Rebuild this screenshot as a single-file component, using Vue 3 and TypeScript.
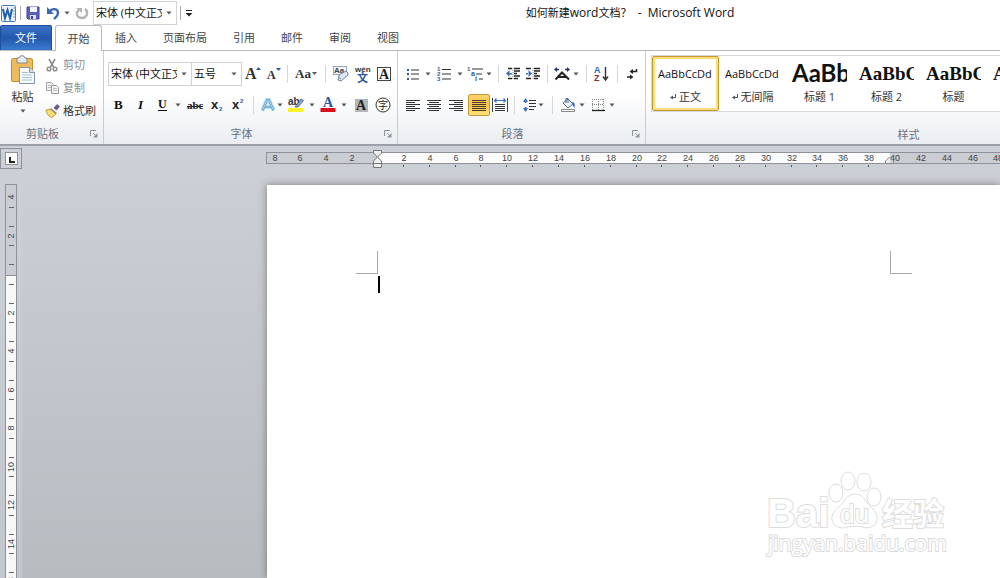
<script setup lang="ts">
interface Glyph { w: number; h: number; body: string }
interface Tool { icon?: string; label: string; kind?: 'sep' | 'caret' | 'on' }
interface StyleItem { sample: string; label: string; mark: boolean; look: string }

const lines = (x: number[], len: number[], color = '#333') =>
  x.map((v, i) => `<path d="M${v} ${i * 2 + 1.5}h${len[i]}" stroke="${color}"/>`).join('')

const serif = 'font-family="Liberation Serif" font-weight="bold"'
const sans = 'font-family="Liberation Sans" font-weight="bold"'
const cjk = 'font-family="Noto Sans CJK SC, sans-serif"'

const glyphs: Record<string, Glyph> = {
  word: { w: 17, h: 17, body: `<rect x="1.5" y=".5" width="14" height="16" rx="1" fill="#e9f2fb" stroke="#4a7fb5"/><path d="M13 3h2M13 6h2M13 9h2M13 12h2" stroke="#7aa7d6"/><path d="M3 4l2 9 2.500-8 2.500 8 2-9" fill="none" stroke="#1d5fa8" stroke-width="2"/>` },
  save: { w: 14, h: 14, body: `<path d="M1 1h12v12H2l-1-1z" fill="#5a5fc0" stroke="#3f4590"/><path d="M4 1h7v5H4z" fill="#f4f6ff"/><path d="M4 9h6v4H4z" fill="#d8dcf4"/><path d="M5 10h2v3H5z" fill="#3f4590"/>` },
  undo: { w: 14, h: 14, body: `<path d="M1 1v7h7z" fill="#3867b5"/><path d="M3 6c3-4 9-4 9 1 0 3-2 4-4 6" fill="none" stroke="#3867b5" stroke-width="2.400"/>` },
  redo: { w: 14, h: 14, body: `<path d="M4 4c-4 3-2 8 3 8 5 0 7-6 3-9" fill="none" stroke="#b4b4b4" stroke-width="2.300"/><path d="M1 2h6v5z" fill="#b4b4b4"/>` },
  caret: { w: 6, h: 4, body: `<path d="M.5 .5h5L3 3.500z" fill="#555"/>` },
  custom: { w: 8, h: 8, body: `<path d="M1 1.500h6" stroke="#222"/><path d="M.5 4h7L4 7.500z" fill="#222"/>` },
  paste: { w: 26, h: 30, body: `<rect x="1.500" y="3.500" width="21" height="23" rx="1.500" fill="#eebb5c" stroke="#c98f2e"/><path d="M7 3h2c0-3 6-3 6 0h2v5H7z" fill="#e6e9ee" stroke="#808792"/><path d="M9.500 12.500h10l5 5v11h-15z" fill="#f8fbff" stroke="#8193ac"/><path d="M19.500 12.500v5h5" fill="#d5e2f4" stroke="#8193ac"/><path d="M12 17.500h6M12 20h10M12 22.500h10M12 25h10" stroke="#a8bcd6"/>` },
  cut: { w: 14, h: 14, body: `<path d="M4 1l4.500 8M10 1L5.500 9" stroke="#8f8f8f" stroke-width="1.700" fill="none"/><circle cx="4" cy="11" r="1.800" fill="none" stroke="#8f8f8f" stroke-width="1.500"/><circle cx="10" cy="11" r="1.800" fill="none" stroke="#8f8f8f" stroke-width="1.500"/>` },
  copy: { w: 15, h: 14, body: `<path d="M1.500 1.500h5l2 2v6h-7z" fill="#eee" stroke="#a8a8a8"/><path d="M6.500 4.500h5l2 2v6h-7z" fill="#f5f5f5" stroke="#999"/><path d="M3 4.500h3M3 6.500h3M8 7.500h4M8 9.500h4" stroke="#bbb"/>` },
  painter: { w: 15, h: 14, body: `<path d="M9 4l3-3.500 2.500 2L11.500 6z" fill="#6a5a9a" stroke="#483c70" stroke-width=".6"/><path d="M6 4l6 5-1.500 1.500L5 6z" fill="#8a8fa0"/><path d="M1 6l4-1 6 5-4 3.500C4 13 1 9 1 6z" fill="#f1d25a" stroke="#b08f24" stroke-width=".7"/><path d="M3 7l4 5M5 6.500l4 4" stroke="#fff2b0"/>` },
  grow: { w: 16, h: 16, body: `<text x="0" y="13" font-size="16" ${serif} fill="#333">A</text><path d="M11 4h5l-2.500-3z" fill="#31579b"/>` },
  shrink: { w: 14, h: 16, body: `<text x="0" y="13" font-size="12" ${serif} fill="#333">A</text><path d="M9 2h5l-2.500 3z" fill="#31579b"/>` },
  letterCase: { w: 22, h: 14, body: `<text x="0" y="11" font-size="13" ${serif} fill="#333">Aa</text><path d="M17 5h5l-2.500 3z" fill="#555"/>` },
  clear: { w: 16, h: 16, body: `<rect x=".5" y=".5" width="13" height="8" fill="#f2f5fa" stroke="#9aa7bb"/><text x="1" y="7" font-size="8" ${sans} fill="#444">Aa</text><path d="M6 9l7-4 2 2v2l-7 6-3-1z" fill="#dfe6f1" stroke="#6f85a8"/><path d="M5 11l3 2" stroke="#6f85a8"/>` },
  phonetic: { w: 18, h: 17, body: `<text x="1" y="6" font-size="8" ${sans} fill="#333">wén</text><text x="3" y="16" font-size="11" font-weight="bold" ${cjk} fill="#31579b">文</text>` },
  border: { w: 16, h: 16, body: `<rect x="1.500" y="1.500" width="13" height="13" fill="#fff" stroke="#444"/><text x="3" y="13" font-size="14" ${serif} fill="#222">A</text>` },
  bold: { w: 12, h: 14, body: `<text x="1" y="11" font-size="13" ${serif} fill="#111">B</text>` },
  italic: { w: 12, h: 14, body: `<text x="3" y="11" font-size="13" font-style="italic" ${serif} fill="#111">I</text>` },
  underline: { w: 12, h: 14, body: `<text x="2" y="10" font-size="12" ${serif} fill="#111">U</text><path d="M2 12.500h9" stroke="#111"/>` },
  strike: { w: 18, h: 14, body: `<text x="1" y="11" font-size="11" ${serif} fill="#222">abc</text><path d="M1 8.500h16" stroke="#222"/>` },
  sub: { w: 14, h: 14, body: `<text x="1" y="11" font-size="13" ${sans} fill="#222">x</text><text x="9" y="13" font-size="6" ${sans} fill="#31579b">2</text>` },
  sup: { w: 14, h: 14, body: `<text x="1" y="11" font-size="13" ${sans} fill="#222">x</text><text x="9" y="5" font-size="6" ${sans} fill="#31579b">2</text>` },
  effect: { w: 16, h: 16, body: `<path d="M2.500 13.500L7 3h2l4.500 10.500M5 10h6" fill="none" stroke="#b5ddf5" stroke-width="4"/><path d="M2.500 13.500L7 3h2l4.500 10.500M5 10h6" fill="none" stroke="#4b92c4" stroke-width="2"/><path d="M2.500 13.500L7 3h2l4.500 10.500M5 10h6" fill="none" stroke="#e8f6ff" stroke-width=".7"/>` },
  highlight: { w: 18, h: 16, body: `<text x="1" y="8" font-size="10" ${sans} fill="#333">ab</text><path d="M8 10l6-8 2.500 1.500L11 10z" fill="#8ba4cc" stroke="#3d5c92" stroke-width=".8"/><path d="M1 11h15v4H1z" fill="#fff12a"/>` },
  color: { w: 16, h: 16, body: `<text x="3" y="10" font-size="14" ${serif} fill="#31579b">A</text><path d="M.5 11h15v4H.5z" fill="#d6111b"/>` },
  shade: { w: 14, h: 14, body: `<path d="M1 1h13v13H1z" fill="#b5b5b5"/><text x="2" y="12" font-size="14" ${serif} fill="#222">A</text>` },
  circled: { w: 16, h: 16, body: `<circle cx="8" cy="8" r="7" fill="#fff" stroke="#333"/><text x="3" y="12" font-size="10" ${cjk} fill="#222">字</text>` },
  bullets: { w: 14, h: 14, body: `<path d="M1 2h2v2H1zM1 6h2v2H1zM1 11h2v2H1z" fill="#31579b"/><path d="M5 3h8M5 7h8M5 12h8" stroke="#333" stroke-width="1.200"/>` },
  numbers: { w: 14, h: 16, body: `<text x="0" y="5" font-size="6" ${sans} fill="#31579b">1</text><text x="0" y="10" font-size="6" ${sans} fill="#31579b">2</text><text x="0" y="15" font-size="6" ${sans} fill="#31579b">3</text><path d="M5 3.500h9M5 8h9M5 13h9" stroke="#333" stroke-width="1.200"/>` },
  levels: { w: 18, h: 16, body: `<text x="1" y="5" font-size="6" ${sans} fill="#31579b">1</text><text x="5" y="10" font-size="7" ${sans} fill="#31579b">a</text><text x="9" y="15" font-size="7" ${sans} fill="#31579b">i</text><path d="M6 3h11M10 8h6M13 13h4" stroke="#333" stroke-width="1.200"/>` },
  outdent: { w: 16, h: 14, body: `<path d="M3 1.500h4M9 1.500h6M9 4h6M9 6.500h3M9 9h6M3 11.500h4M9 11.500h4" stroke="#222" stroke-width="1.600"/><path d="M8 1v12" stroke="#888" stroke-dasharray="1 1"/><path d="M1 6.500L4.500 3v7zM4 6h3v1.500H4z" fill="#3b6fc0"/>` },
  indent: { w: 16, h: 14, body: `<path d="M1 1.500h5M9 1.500h6M9 4h6M9 6.500h3M9 9h6M1 11.500h5M9 11.500h4" stroke="#222" stroke-width="1.600"/><path d="M8 1v12" stroke="#888" stroke-dasharray="1 1"/><path d="M7 6.500L3.500 3v7zM1 6h3v1.500H1z" fill="#3b6fc0"/>` },
  layoutA: { w: 18, h: 14, body: `<path d="M2.500 12.500L9 5.500L16 12.500M5 10h9" fill="none" stroke="#222" stroke-width="2"/><path d="M4 2.500h2M14 2.500h-2" stroke="#26306e" stroke-width="1.500"/><path d="M1 2.500l3-2.500v5zM17 2.500l-3-2.500v5z" fill="#26306e"/>` },
  sort: { w: 16, h: 16, body: `<text x="1" y="7" font-size="9" ${sans} fill="#2f66ad">A</text><text x="1" y="15" font-size="9" ${sans} fill="#8c2f35">Z</text><path d="M12.500 1v12M10 10.500l2.500 3.500 2.500-3.500" fill="none" stroke="#333" stroke-width="1.400"/>` },
  marks: { w: 12, h: 14, body: `<path d="M10.500 2v2.500H5" fill="none" stroke="#222" stroke-width="1.500"/><path d="M3.500 4.500L7 2v5z" fill="#222"/><path d="M1 10h3" stroke="#222" stroke-width="1.500"/><path d="M7.500 10L4 7.500v5z" fill="#222"/>` },
  left: { w: 14, h: 12, body: lines([0, 0, 0, 0, 0], [14, 9, 14, 9, 14]) + '<path d="M0 11.500h9" stroke="#333"/>' },
  center: { w: 14, h: 12, body: lines([0, 2, 0, 2, 0], [14, 10, 14, 10, 14]) + '<path d="M2 11.500h10" stroke="#333"/>' },
  right: { w: 14, h: 12, body: lines([0, 5, 0, 5, 0], [14, 9, 14, 9, 14]) + '<path d="M5 11.500h9" stroke="#333"/>' },
  justify: { w: 14, h: 12, body: lines([0, 0, 0, 0, 0], [14, 14, 14, 14, 14], '#4a3728') + '<path d="M0 11.500h14" stroke="#4a3728"/>' },
  distribute: { w: 16, h: 14, body: `<path d="M.5 0v14M15.500 0v14" stroke="#444"/><path d="M2 2.500h12M4.500 .5l-2 2 2 2M11.500 .5l2 2-2 2" fill="none" stroke="#3b6fc0" stroke-width="1.200"/><path d="M3 6.500h10M3 8.500h10M3 10.500h10M3 12.500h10" stroke="#333"/>` },
  spacing: { w: 16, h: 16, body: `<path d="M5.500 2v4M5.500 10v4" stroke="#3b6fc0" stroke-width="1.500"/><path d="M3 5l2.500-4 2.500 4zM3 11l2.500 4 2.500-4z" fill="#3b6fc0"/><path d="M9 3.500h7M9 6.500h7M9 9.500h7M9 12.500h5" stroke="#333" stroke-width="1.200"/>` },
  fill: { w: 16, h: 16, body: `<path d="M3 6l5-4 5 5-5 4z" fill="#eef3fa" stroke="#4d6b9a"/><path d="M6 6V1.500h2V6" fill="none" stroke="#4d6b9a"/><path d="M12 5c3 0 3 3 2.500 6l-2-3z" fill="#3b6fc0"/><path d="M1.500 12.500h13v2h-13z" fill="#fff" stroke="#8a8a8a"/>` },
  borders: { w: 14, h: 14, body: `<path d="M1 1.500h12M1.500 1v11M7.500 1v11M12.500 1v11M1 6.500h12" stroke="#888" stroke-dasharray="1 1"/><path d="M1 12.500h13" stroke="#222" stroke-width="1.300"/>` },
  launcher: { w: 8, h: 8, body: `<path d="M.5 6V.5H6" fill="none" stroke="#8b93a1"/><path d="M3 3l3 3" stroke="#8b93a1"/><path d="M7.500 3v4.500H3z" fill="#8b93a1"/>` },
  tab: { w: 13, h: 13, body: `<rect x=".5" y=".5" width="12" height="12" fill="#fff" stroke="#8d929a"/><path d="M5 5v5h5" fill="none" stroke="#222" stroke-width="2"/>` },
  returnMark: { w: 6, h: 6, body: `<path d="M5.500 0v3.500H2" fill="none" stroke="#555"/><path d="M0 3.500L3 1.500v4z" fill="#555"/>` },
}

const tabs = ['插入', '页面布局', '引用', '邮件', '审阅', '视图']
const sep: Tool = { label: '', kind: 'sep' }
const more = (label: string): Tool => ({ icon: 'caret', label, kind: 'caret' })
const tool = (icon: string, label: string): Tool => ({ icon, label })

const fontTop: Tool[] = [
  tool('grow', '增大字体'), tool('shrink', '缩小字体'), sep, tool('letterCase', '更改大小写'), sep,
  tool('clear', '清除格式'), tool('phonetic', '拼音指南'), tool('border', '字符边框'),
]
const fontBottom: Tool[] = [
  tool('bold', '加粗'), tool('italic', '倾斜'), tool('underline', '下划线'), more('下划线选项'),
  tool('strike', '删除线'), tool('sub', '下标'), tool('sup', '上标'), sep,
  tool('effect', '文本效果'), more('文本效果选项'), tool('highlight', '突出显示'), more('突出显示选项'),
  tool('color', '字体颜色'), more('字体颜色选项'), tool('shade', '字符底纹'), tool('circled', '带圈字符'),
]
const paraTop: Tool[] = [
  tool('bullets', '项目符号'), more('项目符号选项'), tool('numbers', '编号'), more('编号选项'),
  tool('levels', '多级列表'), more('多级列表选项'), sep, tool('outdent', '减少缩进量'), tool('indent', '增加缩进量'), sep,
  tool('layoutA', '中文版式'), more('中文版式选项'), sep, tool('sort', '排序'), sep, tool('marks', '显示编辑标记'),
]
const paraBottom: Tool[] = [
  tool('left', '文本左对齐'), tool('center', '居中'), tool('right', '文本右对齐'),
  { icon: 'justify', label: '两端对齐', kind: 'on' }, tool('distribute', '分散对齐'), sep,
  tool('spacing', '行距'), more('行距选项'), sep, tool('fill', '底纹'), more('底纹选项'),
  tool('borders', '边框'), more('边框选项'),
]
const styles: StyleItem[] = [
  { sample: 'AaBbCcDd', label: '正文', mark: true, look: 'body' },
  { sample: 'AaBbCcDd', label: '无间隔', mark: true, look: 'body' },
  { sample: 'AaBb', label: '标题 1', mark: false, look: 'h1' },
  { sample: 'AaBbC', label: '标题 2', mark: false, look: 'h2' },
  { sample: 'AaBbC', label: '标题', mark: false, look: 'h2' },
  { sample: 'AaBbC', label: '', mark: false, look: 'h2' },
]

const hOrigin = 112
const hStep = 517 / 40
const hMarks = Array.from({ length: 29 }, (_, i) => (i - 4) * 2)
  .filter((n) => n !== 0)
  .map((n) => ({ n, x: Math.round(hOrigin + n * hStep) }))
const vOrigin = 90
const vStep = 77 / 4
const vMarks = Array.from({ length: 40 }, (_, i) => (i - 2) * 2)
  .filter((n) => n !== 0)
  .map((n) => ({ n, y: Math.round(vOrigin + n * vStep) }))
const vTicks = Array.from({ length: 80 }, (_, i) => Math.round(vOrigin + (i - 3.5) * vStep))
</script>

<template>
  <div class="app">
    <header class="titlebar">
      <div class="quick">
        <svg class="g" width="17" height="17" v-html="glyphs.word.body" />
        <i class="bar" />
        <button aria-label="保存"><svg class="g" width="14" height="14" v-html="glyphs.save.body" /></button>
        <button aria-label="撤消"><svg class="g" width="14" height="14" v-html="glyphs.undo.body" /></button>
        <button aria-label="撤消选项"><svg class="g" width="6" height="4" v-html="glyphs.caret.body" /></button>
        <button aria-label="重复"><svg class="g" width="14" height="14" v-html="glyphs.redo.body" /></button>
        <div class="combo">
          <select aria-label="字体"><option>宋体 (中文正文)</option></select>
          <svg class="g arrow" width="6" height="4" v-html="glyphs.caret.body" />
        </div>
        <i class="bar" />
        <button aria-label="自定义快速访问工具栏"><svg class="g" width="8" height="8" v-html="glyphs.custom.body" /></button>
      </div>
      <h1>如何新建<span>word</span>文档？<span>&nbsp; - &nbsp;Microsoft Word</span></h1>
    </header>

    <nav class="tabs">
      <button class="file">文件</button>
      <button class="active">开始</button>
      <button v-for="t in tabs" :key="t">{{ t }}</button>
    </nav>

    <div class="ribbon">
      <section class="group clipboard">
        <div class="content">
          <button class="paste">
            <svg class="g" width="26" height="30" v-html="glyphs.paste.body" />
            <span>粘贴</span>
            <svg class="g" width="6" height="4" v-html="glyphs.caret.body" />
          </button>
          <div class="side">
            <button class="off"><svg class="g" width="15" height="14" v-html="glyphs.cut.body" />剪切</button>
            <button class="off"><svg class="g" width="15" height="14" v-html="glyphs.copy.body" />复制</button>
            <button><svg class="g" width="15" height="14" v-html="glyphs.painter.body" />格式刷</button>
          </div>
        </div>
        <footer><span>剪贴板</span><button aria-label="剪贴板选项"><svg class="g" width="8" height="8" v-html="glyphs.launcher.body" /></button></footer>
      </section>

      <section class="group font">
        <div class="content">
          <div class="row font-top">
            <div class="combo">
              <select aria-label="字体名称"><option>宋体 (中文正文)</option></select>
              <svg class="g arrow" width="6" height="4" v-html="glyphs.caret.body" />
            </div>
            <div class="combo size">
              <select aria-label="字号"><option>五号</option></select>
              <svg class="g arrow" width="6" height="4" v-html="glyphs.caret.body" />
            </div>
            <template v-for="(t, i) in fontTop" :key="i">
              <i v-if="t.kind === 'sep'" class="sep" />
              <button v-else :aria-label="t.label"><svg class="g" :width="glyphs[t.icon!].w" :height="glyphs[t.icon!].h" v-html="glyphs[t.icon!].body" /></button>
            </template>
          </div>
          <div class="row font-bottom">
            <template v-for="(t, i) in fontBottom" :key="i">
              <i v-if="t.kind === 'sep'" class="sep" />
              <button v-else :aria-label="t.label"><svg class="g" :width="glyphs[t.icon!].w" :height="glyphs[t.icon!].h" v-html="glyphs[t.icon!].body" /></button>
            </template>
          </div>
        </div>
        <footer><span>字体</span><button aria-label="字体选项"><svg class="g" width="8" height="8" v-html="glyphs.launcher.body" /></button></footer>
      </section>

      <section class="group para">
        <div class="content">
          <div class="row para-top">
            <template v-for="(t, i) in paraTop" :key="i">
              <i v-if="t.kind === 'sep'" class="sep" />
              <button v-else :aria-label="t.label"><svg class="g" :width="glyphs[t.icon!].w" :height="glyphs[t.icon!].h" v-html="glyphs[t.icon!].body" /></button>
            </template>
          </div>
          <div class="row para-bottom">
            <template v-for="(t, i) in paraBottom" :key="i">
              <i v-if="t.kind === 'sep'" class="sep" />
              <button v-else :class="{ on: t.kind === 'on' }" :aria-label="t.label"><svg class="g" :width="glyphs[t.icon!].w" :height="glyphs[t.icon!].h" v-html="glyphs[t.icon!].body" /></button>
            </template>
          </div>
        </div>
        <footer><span>段落</span><button aria-label="段落选项"><svg class="g" width="8" height="8" v-html="glyphs.launcher.body" /></button></footer>
      </section>

      <section class="group styles">
        <div class="gallery">
          <button v-for="(s, i) in styles" :key="i" :class="{ chosen: i === 0 }">
            <span class="sample" :class="s.look">{{ s.sample }}</span>
            <span class="name"><svg v-if="s.mark" class="g" width="6" height="6" v-html="glyphs.returnMark.body" />{{ s.label }}</span>
          </button>
        </div>
        <footer><span>样式</span></footer>
      </section>
    </div>

    <div class="work">
      <aside class="gutter">
        <button class="tabstop" aria-label="制表符"><svg class="g" width="13" height="13" v-html="glyphs.tab.body" /></button>
        <svg class="vruler">
          <rect x=".5" y=".5" width="11" height="3000" fill="#f8f8f9" stroke="#8d929a" />
          <rect x=".5" y=".5" width="11" height="91" fill="#cacdd2" stroke="#8d929a" />
          <path v-for="y in vTicks" :key="y" :d="`M4 ${y + 0.5}h5`" stroke="#666" />
          <text v-for="m in vMarks" :key="m.n" :transform="`translate(9 ${m.y}) rotate(-90)`">{{ Math.abs(m.n) }}</text>
        </svg>
      </aside>
      <div class="desk">
        <svg class="hruler">
          <rect x=".5" y="3.500" width="3000" height="11" fill="#cacdd2" stroke="#8d929a" />
          <path d="M111 4h513v10H111z" fill="#fbfbfb" />
          <template v-for="m in hMarks" :key="m.n">
            <text :x="m.x" y="12">{{ Math.abs(m.n) }}</text>
            <path v-if="m.n > 0 && m.n < 40" :d="`M${m.x - 0.5} 16v2`" stroke="#555" />
          </template>
          <path d="M107.500 1.500h8v2.500l-4 4-4-4zM107.500 14.500v-2.500l4-4 4 4v2.500zM107.500 14.500h8v4h-8z" fill="#eee" stroke="#777" />
          <path d="M619.500 14.500v-2.500l4-4 4 4v2.500z" fill="#ddd" fill-opacity=".5" stroke="#888" />
        </svg>
        <main class="page">
          <div class="corners"><i class="corner l" /><i class="corner r" /></div>
          <i class="cursor" />
        </main>
      </div>
      <svg class="watermark" width="184" height="96" viewBox="0 0 184 96">
        <g fill="#fff" stroke="#dcdcdc" stroke-width="1">
          <text x="3" y="59" class="latin">Bai</text>
          <text x="118" y="57" class="zh">经验</text>
          <ellipse cx="72" cy="25" rx="7" ry="9" />
          <ellipse cx="84" cy="13" rx="7" ry="9" />
          <ellipse cx="100" cy="14" rx="7" ry="9" />
          <ellipse cx="110" cy="29" rx="7" ry="9" />
          <path d="M91 26c-8 0-10 7-15 12-5 4-9 8-8 14 2 8 10 9 16 7 5-1 9-1 14 0 7 2 14 0 15-7 1-6-3-10-7-14-5-5-7-12-15-12z" />
          <text x="76" y="55" class="du">du</text>
          <text x="4" y="83" class="url">jingyan.baidu.com</text>
        </g>
      </svg>
    </div>
  </div>
</template>

<style>
html, body { margin: 0; }
</style>

<style scoped>
.app {
  display: flex;
  flex-direction: column;
  height: 100vh;
  overflow: hidden;
  background: #fff;
  color: #333;
  font: 11px/16px "Open Sans", "Noto Sans CJK SC", sans-serif;
}
button {
  display: flex;
  align-items: center;
  justify-content: center;
  margin: 0;
  padding: 0;
  border: 0;
  background: none;
  color: inherit;
  font: inherit;
  white-space: nowrap;
}
.g { display: block; flex: none; overflow: visible; }
.titlebar { display: flex; align-items: center; flex: none; height: 25px; }
.titlebar h1 {
  flex: 1;
  margin: 0;
  padding-left: 66px;
  color: #111;
  font-size: 11px;
  font-weight: 400;
  text-align: center;
}
.titlebar h1 span { font-size: 12px; }
.quick {
  display: grid;
  grid-template-columns: 17px 6px 20px 20px 8px 22px 84px 7px 10px;
  align-items: center;
  height: 23px;
}
.bar { justify-self: center; width: 1px; height: 14px; background: #aaa; }
.combo {
  display: grid;
  grid-template-columns: 1fr 14px;
  align-items: center;
  box-sizing: border-box;
  height: 24px;
  border: 1px solid #cfd2d7;
  background: #fff;
}
.combo select {
  appearance: none;
  width: 100%;
  min-width: 0;
  margin: 0;
  padding: 0 0 0 2px;
  border: 0;
  background: none;
  color: #111;
  font: 11px/20px "Open Sans", "Noto Sans CJK SC", sans-serif;
}
.arrow { justify-self: center; }
.tabs { display: flex; flex: none; height: 25px; border-bottom: 1px solid #b5b8bd; }
.tabs button { padding: 0 13px; color: #444; }
.tabs .file {
  width: 52px;
  margin-right: 3px;
  border: 1px solid #1c4f9c;
  border-bottom: 0;
  border-radius: 2px 2px 0 0;
  background: linear-gradient(#3c72c6, #2358ac 50%, #3a7bd0);
  color: #fff;
}
.tabs .active {
  box-sizing: border-box;
  width: 47px;
  height: 26px;
  padding: 0;
  border: 1px solid #b5b8bd;
  border-bottom: 0;
  border-radius: 3px 3px 0 0;
  background: #fff;
}
.ribbon {
  display: flex;
  flex: none;
  height: 93px;
  border-bottom: 2px solid #9b9fa9;
  background: linear-gradient(#fff 45%, #eaedf1);
}
.group {
  display: flex;
  flex-direction: column;
  flex: none;
  box-sizing: border-box;
  border-right: 1px solid #c9ccd2;
}
.clipboard { width: 104px; }
.font { width: 294px; padding-left: 4px; }
.para { width: 248px; padding-left: 4px; }
.styles { flex: 1 0 524px; padding-left: 6px; }
.content { flex: 1; }
.group footer { display: flex; height: 20px; align-items: center; color: #6a7180; }
.group footer span { flex: 1; text-align: center; }
.group footer button { width: 18px; }
.font footer, .para footer, .styles footer { margin-left: -4px; }
.clipboard .content { display: flex; }
.paste { flex-direction: column; justify-content: flex-start; gap: 4px; width: 45px; padding-top: 4px; }
.side { display: flex; flex-direction: column; gap: 7px; padding-top: 6px; }
.side button { justify-content: flex-start; gap: 3px; height: 16px; }
.side .off { color: #8f8f8f; }
.row { display: grid; align-items: center; height: 24px; }
.row button { height: 22px; }
.font-top, .para-top { margin: 11px 0 7px; }
.font-top { grid-template-columns: 84px 50px 22px 20px 7px 30px 8px 24px 20px 22px; }
.font-bottom { grid-template-columns: 22px 22px 20px 12px 22px 22px 20px 11px 18px 6px 26px 6px 26px 6px 28px 16px; }
.para-top { grid-template-columns: 22px 8px 24px 8px 22px 6px 12px 18px 22px 6px 24px 4px 16px 14px 18px 12px; }
.para-bottom { grid-template-columns: 22px 20px 24px 22px 20px 8px 20px 6px 16px 16px 12px 20px 8px; }
.size { border-left: 0; }
.sep { justify-self: center; width: 1px; height: 18px; background: #d5d7db; }
.row .on {
  border: 1px solid #c29a3a;
  border-radius: 2px;
  background: linear-gradient(#fbd26b, #fbc54d 50%, #fde27c);
}
.gallery {
  display: grid;
  grid-template-columns: repeat(6, 67px);
  flex: none;
  height: 55px;
  margin: 4px 0 13px -1px;
  border: 1px solid #d5d8dd;
  border-right: 0;
  background: #fff;
}
.gallery button {
  flex-direction: column;
  justify-content: flex-start;
  box-sizing: border-box;
  height: 55px;
  padding-top: 5px;
}
.gallery .chosen {
  padding-top: 4px;
  border: 1px solid #c79a2c;
  border-radius: 2px;
  box-shadow: inset 0 0 0 2px #fbdc7d;
}
.sample {
  width: 55px;
  height: 26px;
  overflow: hidden;
  color: #111;
  line-height: 26px;
  text-align: left;
}
.body { font-size: 11px; font-family: "Open Sans", sans-serif; }
.h1 { font: bold 24px/24px Lato, sans-serif; }
.h2 { font: bold 19px/26px "Liberation Serif", serif; }
.name { display: flex; align-items: center; gap: 3px; height: 20px; }
.work {
  position: relative;
  display: flex;
  flex: 1;
  min-height: 0;
  overflow: hidden;
  background: linear-gradient(#cdd0d6, #b8bbc0);
}
.gutter {
  display: flex;
  flex-direction: column;
  flex: none;
  width: 22px;
  background: linear-gradient(#cdd1d7, #c3c7cd);
}
.tabstop {
  box-sizing: border-box;
  flex: none;
  width: 22px;
  height: 21px;
  margin: 2px 0 15px;
  border: 1px solid #8d929a;
}
.vruler { flex: 1; width: 12px; margin-left: 5px; overflow: hidden; }
.vruler text, .hruler text {
  fill: #444;
  font: 9px "Liberation Sans", sans-serif;
  text-anchor: middle;
}
.desk { display: flex; flex-direction: column; flex: 1; min-width: 0; padding: 3px 0 0 244px; }
.hruler { flex: none; width: 100%; height: 20px; overflow: hidden; }
.page {
  flex: 1;
  margin: 16px 0 0 1px;
  padding-top: 66px;
  background: #fff;
  box-shadow: 0 0 8px #555a;
}
.corners { display: flex; justify-content: space-between; padding: 0 88px 0 89px; }
.corner { width: 21px; height: 22px; border: 0 solid #aaa; border-bottom-width: 1px; }
.corner.l { border-right-width: 1px; }
.corner.r { border-left-width: 1px; }
.cursor { display: block; width: 2px; height: 17px; margin: 2px 0 0 111px; background: #000; }
.watermark { position: absolute; right: 52px; bottom: 14px; }
.watermark text { paint-order: stroke; stroke-width: 2px; }
.watermark .latin { font: bold 40px "Liberation Sans", sans-serif; }
.watermark .du { font: 26px "Liberation Sans", sans-serif; }
.watermark .zh { font: bold 31px "Noto Sans CJK SC", sans-serif; }
.watermark .url { font: 21px "Open Sans", sans-serif; }
</style>
